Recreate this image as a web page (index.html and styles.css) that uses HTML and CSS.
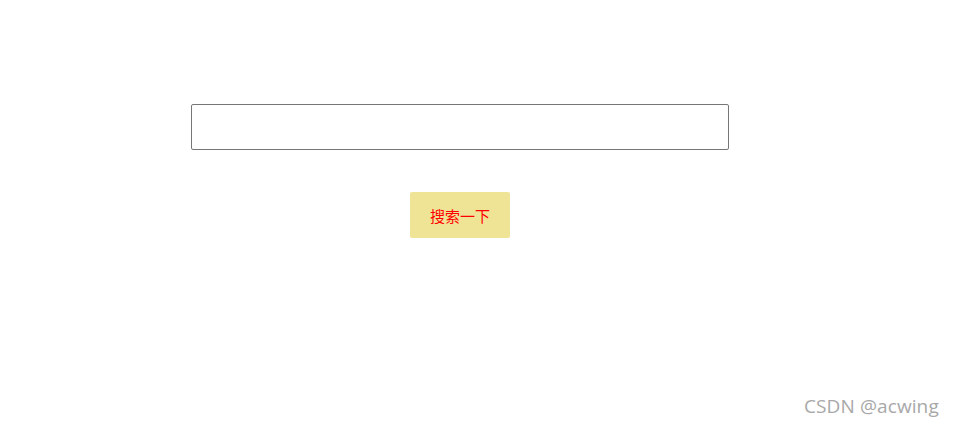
FILE: index.html
```html
<!DOCTYPE html>
<html lang="zh">
<head>
<meta charset="utf-8">
<title>搜索</title>
<link rel="stylesheet" href="styles.css">
</head>
<body>
<div class="page">
  <form class="search">
    <input class="search-input" type="text">
    <button class="search-btn" type="button">搜索一下</button>
  </form>
</div>
<div class="watermark">CSDN @acwing</div>
</body>
</html>
```
FILE: styles.css
```css
html, body {
  margin: 0;
  padding: 0;
  background: #fff;
}
.page {
  width: 920px;
  padding-top: 104px;
}
.search {
  display: flex;
  flex-direction: column;
  align-items: center;
  gap: 42px;
  margin: 0;
}
.search-input {
  box-sizing: border-box;
  width: 538px;
  height: 46px;
  margin: 0;
  border: 1px solid #767676;
  border-radius: 2px;
  background: #fff;
  padding: 0 8px;
  font-size: 16px;
  outline: none;
}
.search-btn {
  box-sizing: border-box;
  width: 100px;
  height: 46px;
  margin: 0;
  padding: 0;
  border: none;
  border-radius: 2px;
  background: #efe495;
  color: #ff0000;
  font-family: "Noto Sans CJK SC", "Noto Sans", sans-serif;
  font-size: 15px;
  cursor: pointer;
}
.watermark {
  position: absolute;
  left: 804px;
  top: 393px;
  font-family: "Open Sans", "Noto Sans", sans-serif;
  font-size: 19px;
  color: #a8a8a8;
  letter-spacing: 0.1px;
}
```
